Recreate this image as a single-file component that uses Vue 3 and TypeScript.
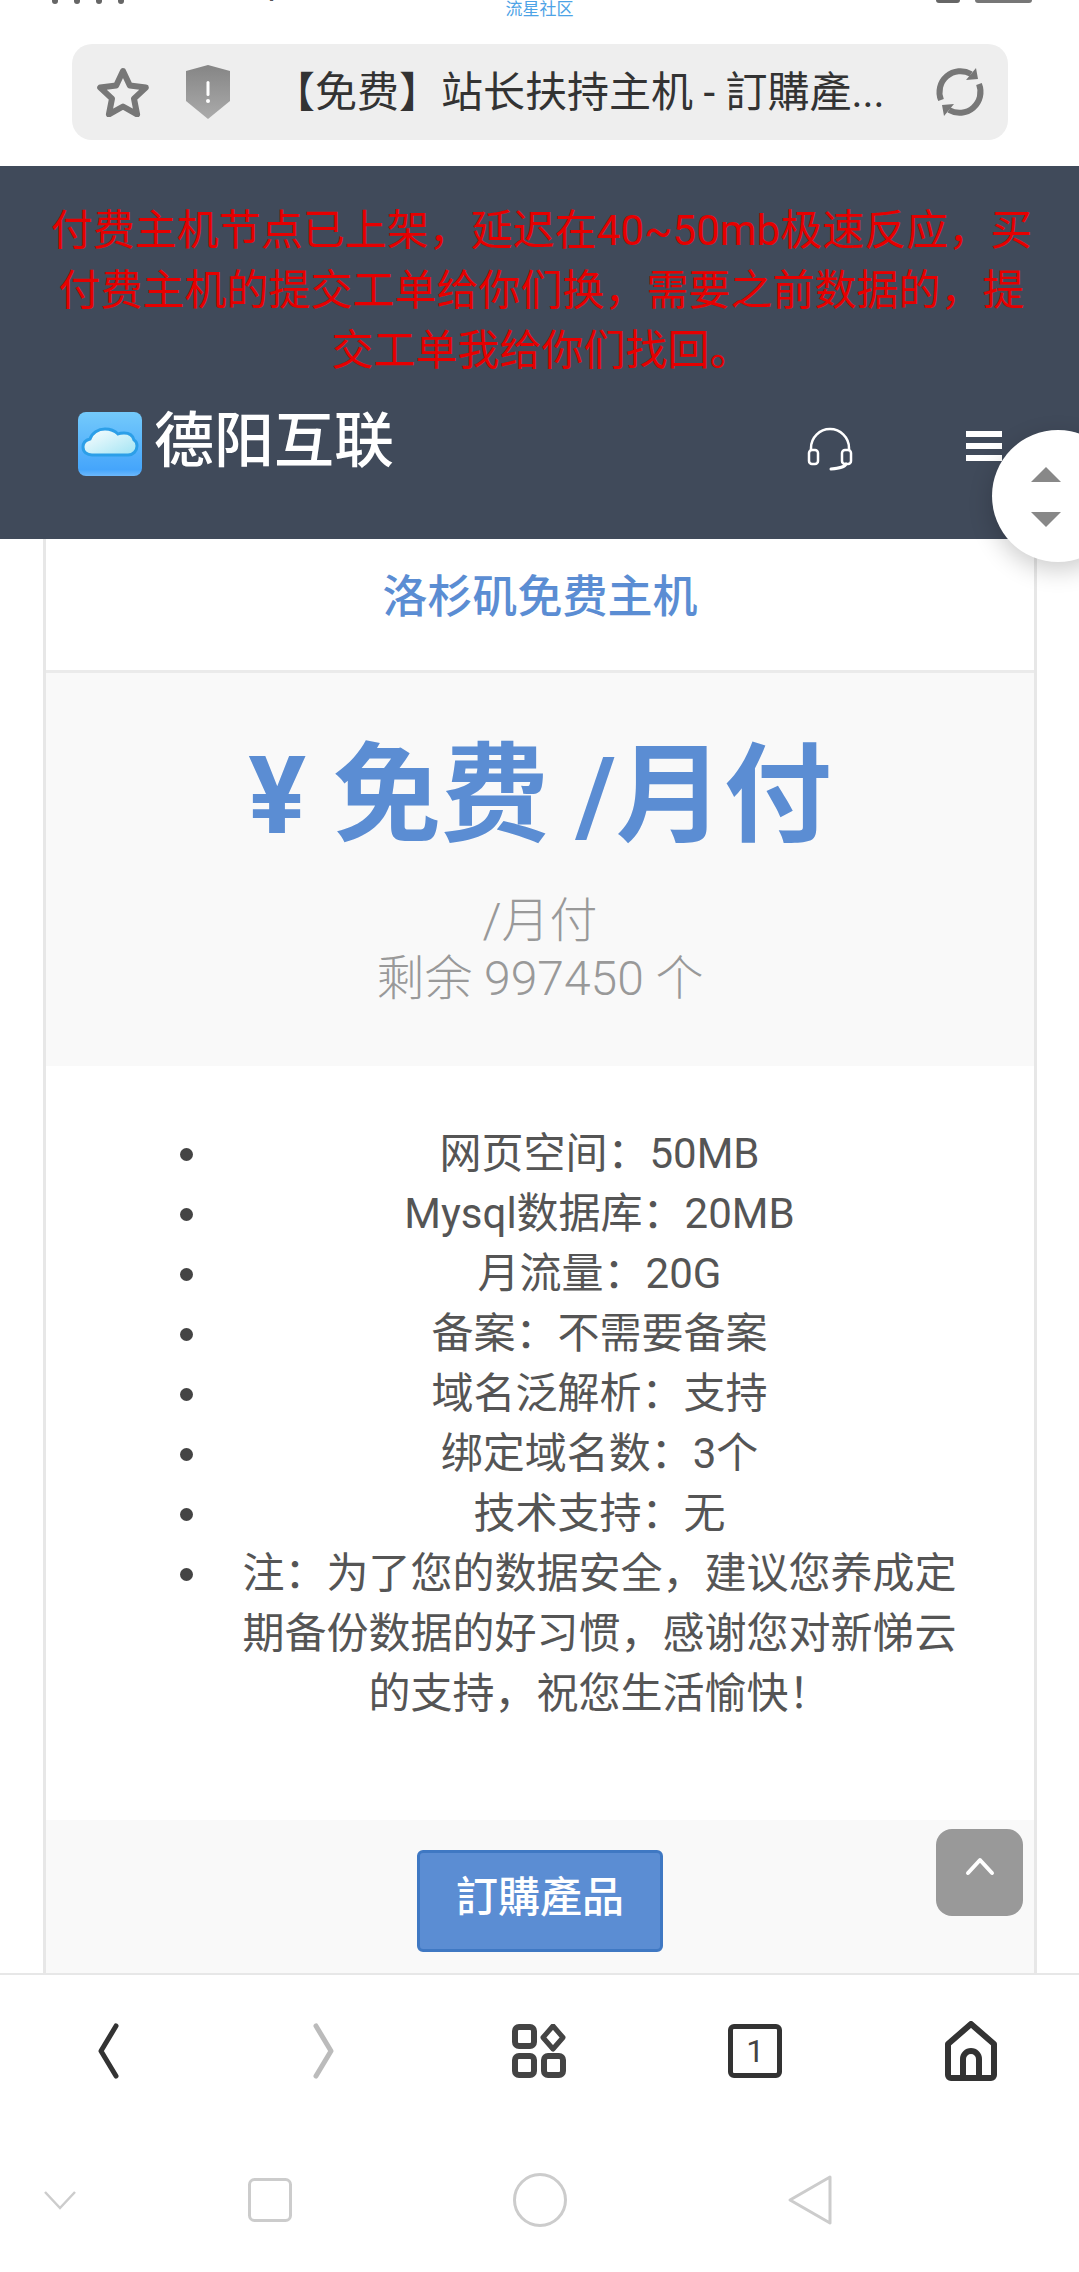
<script setup lang="ts">
const features = [
  '网页空间：50MB',
  'Mysql数据库：20MB',
  '月流量：20G',
  '备案：不需要备案',
  '域名泛解析：支持',
  '绑定域名数：3个',
  '技术支持：无',
  '注：为了您的数据安全，建议您养成定期备份数据的好习惯，感谢您对新悌云的支持，祝您生活愉快！'
];
</script>

<template>
  <div class="phone">
    <div class="status">
      <div class="status-left">
        <i class="dab"></i><i class="dab"></i><i class="dab"></i><i class="dab"></i>
        <span class="speed">0.00 KB/s</span>
      </div>
      <span class="watermark">流星社区</span>
      <div class="status-right">
        <i class="dot"></i>
        <i class="battery"></i>
      </div>
    </div>

    <div class="urlwrap">
      <div class="urlbar">
        <svg class="star" width="54" height="50" viewBox="0 0 54 50">
          <path d="M27 4l6.8 14.6 16 2-11.800 11 3.100 15.800L27 39.500 12.900 47.400 16 31.600 4.200 20.600l16-2z" fill="none" stroke="#777" stroke-width="6" stroke-linejoin="round" />
        </svg>
        <svg class="shield" width="46" height="54" viewBox="0 0 46 54">
          <defs>
            <linearGradient id="shieldFill" x1="0" y1="0" x2="0" y2="1">
              <stop offset="0" stop-color="#858585" />
              <stop offset="1" stop-color="#ababab" />
            </linearGradient>
          </defs>
          <path d="M23 0l22 6v30L23 54 1 36V6z" fill="url(#shieldFill)" />
          <rect x="21.500" y="16" width="3" height="15" rx="1.500" fill="#fff" />
          <circle cx="23" cy="36" r="2" fill="#fff" />
        </svg>
        <span class="urltext">【免费】站长扶持主机 - 訂購產...</span>
        <svg class="reload" width="50" height="50" viewBox="0 0 50 50">
          <path d="M6 33A21 21 0 0 1 36 7" fill="none" stroke="#777" stroke-width="6" />
          <path d="M44 17A21 21 0 0 1 14 43" fill="none" stroke="#777" stroke-width="6" />
          <path d="M31 13l12-1-2-11zM19 37L7 38l2 11z" fill="#777" />
        </svg>
      </div>
    </div>

    <header class="site-header">
      <p class="notice">付费主机节点已上架，延迟在40~50mb极速反应，买付费主机的提交工单给你们换，需要之前数据的，提交工单我给你们找回。</p>
      <div class="brand-row">
        <div class="brand">
          <svg class="logo" width="64" height="64" viewBox="0 0 64 64">
            <defs>
              <linearGradient id="logoBg" x1="0" y1="0" x2="0" y2="1">
                <stop offset="0" stop-color="#74cafb" />
                <stop offset="0.9" stop-color="#45a5fb" />
                <stop offset="1" stop-color="#6db8fb" />
              </linearGradient>
              <linearGradient id="cloudFill" x1="0" y1="0" x2="1" y2="1">
                <stop offset="0" stop-color="#ffffff" />
                <stop offset="1" stop-color="#9fe3f3" />
              </linearGradient>
            </defs>
            <rect width="64" height="64" rx="8" fill="url(#logoBg)" />
            <path d="M14 43c-5 0-9-3-9-8 0-4 3-7 7-8 2-6 8-10 15-10 6 0 10 2 13 5 2-1 4-1 6-1 6 0 9 3 10 7 2 1 3 3 3 6 0 5-4 9-9 9z" fill="url(#cloudFill)" stroke="#2c9fe8" stroke-width="3" />
          </svg>
          <span class="brand-name">德阳互联</span>
        </div>
        <svg class="headset" width="46" height="44" viewBox="0 0 46 44">
          <path d="M4 24V21a19 19 0 0 1 38 0v3" fill="none" stroke="#fff" stroke-width="2.500" />
          <rect x="2" y="23" width="9" height="14" rx="3" fill="none" stroke="#fff" stroke-width="2.500" />
          <rect x="35" y="23" width="9" height="14" rx="3" fill="none" stroke="#fff" stroke-width="2.500" />
          <path d="M39 37c-1 3-6 4-15 5" fill="none" stroke="#fff" stroke-width="3" stroke-linecap="round" />
        </svg>
        <div class="burger"><i></i><i></i><i></i></div>
      </div>
    </header>

    <main class="content">
      <section class="card">
        <h3 class="plan-title">洛杉矶免费主机</h3>
        <div class="price-block">
          <div class="price">¥ 免费 /月付</div>
          <div class="cycle">/月付</div>
          <div class="stock">剩余 997450 个</div>
        </div>
        <ul class="features">
          <li v-for="item in features" :key="item">{{ item }}</li>
        </ul>
        <div class="card-foot">
          <button class="order-btn">訂購產品</button>
        </div>
      </section>
    </main>

    <nav class="browser-nav">
      <svg width="30" height="56" viewBox="0 0 30 56">
        <path d="M23 3L8 28l15 25" fill="none" stroke="#333" stroke-width="5" stroke-linecap="round" stroke-linejoin="round" />
      </svg>
      <svg width="30" height="56" viewBox="0 0 30 56">
        <path d="M7 3l15 25L7 53" fill="none" stroke="#bbb" stroke-width="5" stroke-linecap="round" stroke-linejoin="round" />
      </svg>
      <svg width="54" height="54" viewBox="0 0 54 54">
        <g fill="none" stroke="#444" stroke-width="6">
          <rect x="3" y="3" width="19" height="19" rx="4" />
          <rect x="3" y="32" width="19" height="19" rx="4" />
          <rect x="32" y="32" width="19" height="19" rx="4" />
          <path d="M41 2l10 11.500L41 25 31 13.500z" stroke-width="5" stroke-linejoin="round" />
        </g>
      </svg>
      <div class="tab-count">1</div>
      <svg width="56" height="60" viewBox="0 0 56 60">
        <path d="M28 3L5 23v31a3 3 0 0 0 3 3h40a3 3 0 0 0 3-3V23z" fill="none" stroke="#333" stroke-width="6" stroke-linejoin="round" />
        <path d="M20 56V38a8 8 0 0 1 16 0v18" fill="none" stroke="#333" stroke-width="6" />
      </svg>
    </nav>

    <nav class="system-nav">
      <svg width="34" height="20" viewBox="0 0 34 20">
        <path d="M2 2l15 16L32 2" fill="none" stroke="#ccc" stroke-width="2.500" />
      </svg>
      <svg width="44" height="44" viewBox="0 0 44 44">
        <rect x="1.500" y="1.500" width="41" height="41" rx="5" fill="none" stroke="#ccc" stroke-width="3" />
      </svg>
      <svg width="54" height="54" viewBox="0 0 54 54">
        <circle cx="27" cy="27" r="25.500" fill="none" stroke="#ccc" stroke-width="3" />
      </svg>
      <svg width="46" height="52" viewBox="0 0 46 52">
        <path d="M43 3L3 26l40 23z" fill="none" stroke="#ccc" stroke-width="3" stroke-linejoin="round" />
      </svg>
    </nav>

    <div class="scroll-handle">
      <i class="tri up"></i>
      <i class="tri down"></i>
    </div>

    <div class="back-top">
      <svg width="30" height="20" viewBox="0 0 30 20">
        <path d="M3 17L15 4l12 13" fill="none" stroke="#fff" stroke-width="4" stroke-linecap="round" stroke-linejoin="round" />
      </svg>
    </div>
  </div>
</template>

<style scoped>
.phone {
  position: relative;
  width: 1079px;
  height: 2272px;
  overflow: hidden;
  display: flex;
  flex-direction: column;
  background: #fff;
  font-family: Roboto, "Noto Sans CJK SC", sans-serif;
}

.status {
  height: 18px;
  display: grid;
  grid-template-columns: 1fr auto 1fr;
  overflow: hidden;
}

.status-left {
  display: flex;
  gap: 16px;
  padding-left: 52px;
  height: 5px;
  overflow: hidden;
}

.dab {
  width: 6px;
  height: 4px;
  border-radius: 0 0 3px 3px;
  background: #666;
}

.speed {
  margin: -26px 0 0 24px;
  font-size: 30px;
  line-height: 30px;
  font-weight: 700;
  color: #555;
}

.watermark {
  font-size: 17px;
  line-height: 18px;
  color: #4da3e6;
}

.status-right {
  display: flex;
  justify-content: flex-end;
  gap: 15px;
  padding-right: 47px;
}

.dot {
  width: 24px;
  height: 3px;
  border-radius: 0 0 12px 12px;
  background: #666;
}

.battery {
  width: 57px;
  height: 3px;
  border-radius: 0 0 6px 6px;
  background: #777;
}

.urlwrap {
  padding: 26px 71px 26px 72px;
}

.urlbar {
  height: 96px;
  display: flex;
  align-items: center;
  border-radius: 20px;
  background: #eee;
  padding: 0 23px 0 24px;
}

.star { flex: none; }

.shield {
  flex: none;
  margin-left: 35px;
}

.urltext {
  flex: 1;
  margin-left: 42px;
  padding-bottom: 8px;
  font-size: 42px;
  color: #333;
  white-space: nowrap;
}

.reload { flex: none; }

.site-header {
  height: 373px;
  background: #404a5a;
}

.notice {
  margin: 0;
  padding: 35px 46px 0 50px;
  font-size: 42px;
  line-height: 60px;
  text-align: center;
  color: #e60000;
}

.brand-row {
  display: flex;
  align-items: center;
  height: 126px;
  padding: 0 77px 0 78px;
}

.brand {
  flex: 1;
  display: flex;
  align-items: center;
  gap: 12px;
}

.logo { flex: none; }

.brand-name {
  padding-bottom: 4px;
  font-size: 60px;
  line-height: 64px;
  font-weight: 500;
  color: #fff;
}

.headset {
  margin: 9px 113px 0 0;
}

.burger {
  display: flex;
  flex-direction: column;
  gap: 6px;
  width: 36px;
  margin-top: 4px;
}

.burger i {
  height: 6px;
  background: #fff;
}

.content {
  flex: 1;
  min-height: 0;
  padding: 0 42px 0 43px;
}

.card {
  height: 100%;
  display: flex;
  flex-direction: column;
  border: solid #e7e7e7;
  border-width: 0 3px;
}

.plan-title {
  margin: 0;
  height: 131px;
  line-height: 118px;
  text-align: center;
  font-size: 45px;
  font-weight: 500;
  color: #5b8dd3;
  border-bottom: 3px solid #ebebeb;
}

.price-block {
  height: 393px;
  background: #f9f9f9;
  text-align: center;
  padding-top: 54px;
  box-sizing: border-box;
}

.price {
  font-size: 108px;
  line-height: 138px;
  font-weight: 700;
  color: #5b8dd3;
}

.cycle {
  margin-top: 27px;
  font-size: 48px;
  line-height: 58px;
  font-weight: 300;
  color: #999;
}

.stock {
  font-size: 48px;
  line-height: 58px;
  font-weight: 300;
  color: #999;
}

.features {
  flex: 1;
  margin: 0;
  padding: 58px 63px 0 182px;
  list-style: none;
  font-size: 42px;
  line-height: 60px;
  text-align: center;
  color: #555;
}

.features li {
  position: relative;
}

.features li::before {
  content: "";
  position: absolute;
  left: -48px;
  top: 24px;
  width: 13px;
  height: 13px;
  border-radius: 50%;
  background: #444;
}

.card-foot {
  height: 153px;
  padding-top: 30px;
  box-sizing: border-box;
  background: #f9f9f9;
  text-align: center;
}

.order-btn {
  width: 246px;
  height: 102px;
  padding: 0 0 16px;
  border: 3px solid #3f78c3;
  border-radius: 6px;
  background: #5b8dd3;
  color: #fff;
  font-family: inherit;
  font-size: 42px;
  font-weight: 500;
}

.browser-nav {
  height: 152px;
  display: grid;
  grid-template-columns: repeat(5, 1fr);
  place-items: center;
  border-top: 2px solid #e7e7e7;
}

.tab-count {
  box-sizing: border-box;
  width: 54px;
  height: 54px;
  border: 5px solid #333;
  border-radius: 6px;
  text-align: center;
  font-size: 32px;
  line-height: 44px;
  color: #444;
}

.system-nav {
  height: 145px;
  display: grid;
  grid-template-columns: 120px 300px 240px 300px;
  place-items: center;
}

.scroll-handle {
  position: absolute;
  left: 992px;
  top: 430px;
  width: 132px;
  height: 132px;
  border-radius: 50%;
  background: #fff;
  box-shadow: 0 8px 24px rgba(0, 0, 0, 0.2);
}

.tri {
  position: absolute;
  left: 39px;
  width: 0;
  height: 0;
  border-left: 15px solid transparent;
  border-right: 15px solid transparent;
}

.tri.up {
  top: 37px;
  border-bottom: 15px solid #888;
}

.tri.down {
  top: 82px;
  border-top: 15px solid #888;
}

.back-top {
  position: absolute;
  left: 936px;
  top: 1829px;
  width: 87px;
  height: 87px;
  border-radius: 16px;
  background: #999;
  display: flex;
  justify-content: center;
  padding-top: 27px;
  box-sizing: border-box;
}
</style>

<style>
body {
  margin: 0;
}
</style>
